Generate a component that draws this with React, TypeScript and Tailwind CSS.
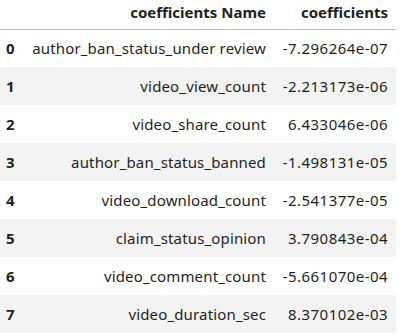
import React from "react";

const rows: [string, string, string][] = [
  ["0", "author_ban_status_under review", "-7.296264e-07"],
  ["1", "video_view_count", "-2.213173e-06"],
  ["2", "video_share_count", "6.433046e-06"],
  ["3", "author_ban_status_banned", "-1.498131e-05"],
  ["4", "video_download_count", "-2.541377e-05"],
  ["5", "claim_status_opinion", "3.790843e-04"],
  ["6", "video_comment_count", "-5.661070e-04"],
  ["7", "video_duration_sec", "8.370102e-03"],
];

export default function App() {
  return (
    <div className="w-[400px] h-[335px] bg-white overflow-hidden" style={{ fontFamily: '"Noto Sans", sans-serif' }}>
      <table className="border-collapse table-fixed w-[396px] text-[15px] text-[#1f1f1f]">
        <colgroup>
          <col className="w-[28px]" />
          <col className="w-[242px]" />
          <col />
        </colgroup>
        <thead>
          <tr className="h-[29px] border-b border-[#bdbdbd]">
            <th></th>
            <th className="text-right font-bold pr-[4px] pb-[5px] align-middle whitespace-nowrap">coefficients Name</th>
            <th className="text-right font-bold pr-[8px] pb-[5px] align-middle">coefficients</th>
          </tr>
        </thead>
        <tbody>
          {rows.map((r, i) => (
            <tr key={i} className={`h-[38px] ${i % 2 === 1 ? "bg-[#f3f3f3]" : "bg-white"}`}>
              <td className="font-bold pl-[6px]">{r[0]}</td>
              <td className="text-right pr-[4px] whitespace-nowrap tracking-[0.15px]">{r[1]}</td>
              <td className="text-right pr-[8px] whitespace-nowrap tracking-[0.45px]">{r[2]}</td>
            </tr>
          ))}
        </tbody>
      </table>
    </div>
  );
}
